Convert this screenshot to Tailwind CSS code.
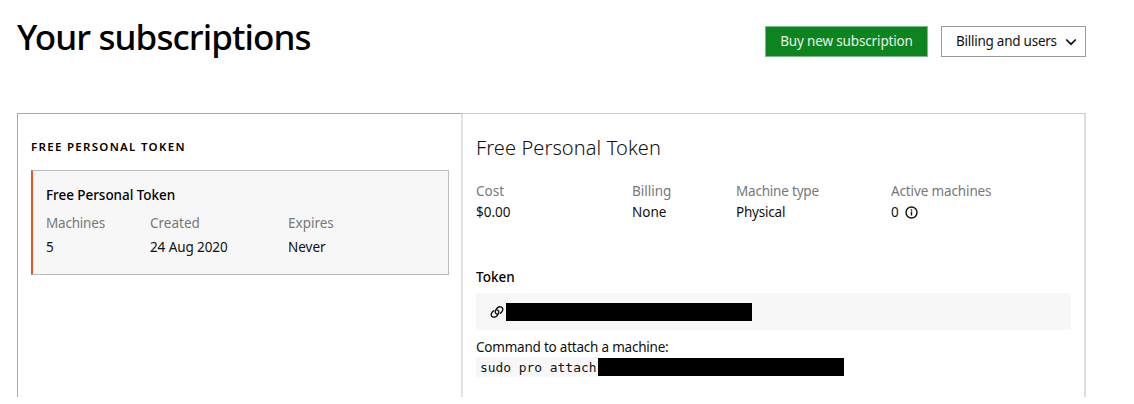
<!DOCTYPE html>
<html lang="en">
<head>
<meta charset="utf-8">
<title>Your subscriptions</title>
<script src="https://cdn.jsdelivr.net/npm/@tailwindcss/browser@4"></script>
</head>
<body class="h-[404px] overflow-hidden bg-white font-['Noto_Sans',sans-serif] text-[13.5px] leading-[21px] text-[#111]">
<div class="ml-[17px] w-[1069px]">
  <header class="flex h-[113px] justify-between">
    <h1 class="pt-[13px] text-[35px] leading-[48px] font-medium tracking-[-0.9px] text-black whitespace-nowrap">Your subscriptions</h1>
    <div class="flex gap-[13px] pt-[25px]">
      <button class="mt-px h-[31px] w-[163px] whitespace-nowrap border border-[#7dbb87] bg-[#0e8420] tracking-[-0.15px] text-[#e4f2e6]">Buy new subscription</button>
      <button class="mt-px flex h-[31px] w-[145px] items-center justify-between whitespace-nowrap border border-[#999] pr-[8px] pl-[14px] tracking-[-0.25px]">
        <span>Billing and users</span>
        <svg class="size-3" viewBox="0 0 12 12" fill="none" stroke="#111" stroke-width="1.7"><path d="M1.2 3.5 6 8.2 10.8 3.5"/></svg>
      </button>
    </div>
  </header>
  <main class="flex h-[284px]">
    <section class="w-[446px] border-t border-r-2 border-l border-t-[#aaa] border-r-[#e2e2e2] border-l-[#aaa] pt-[22px] pl-[13px]">
      <h2 class="text-[11.5px] leading-[21px] font-semibold tracking-[1.3px] whitespace-nowrap text-black">FREE PERSONAL TOKEN</h2>
      <div class="mt-[13px] h-[105px] w-[418px] border border-l-2 border-[#bbb] border-l-[#e95420] bg-[#f7f7f7] pt-[12px] pl-[13px]">
        <h3 class="leading-[24px] font-medium tracking-[-0.05px] text-black">Free Personal Token</h3>
        <div class="mt-[4px] grid grid-cols-[104px_138px_100px] leading-[24px]">
          <span class="tracking-[-0.2px] text-[#777]">Machines</span><span class="text-[#777]">Created</span><span class="text-[#777]">Expires</span>
          <span>5</span><span class="tracking-[-0.1px]">24 Aug 2020</span><span>Never</span>
        </div>
      </div>
    </section>
    <section class="w-[623px] border-t border-r-2 border-t-[#ccc] border-r-[#ddd] pt-[19px] pr-[13px] pl-[13px]">
      <h2 class="text-[20px] leading-[30px] font-light tracking-[0.1px]">Free Personal Token</h2>
      <div class="mt-[18px] grid grid-cols-[156px_104px_155px_150px]">
        <span class="text-[#777]">Cost</span><span class="text-[#777]">Billing</span><span class="tracking-[-0.2px] text-[#777]">Machine type</span><span class="tracking-[-0.13px] text-[#777]">Active machines</span>
        <span>$0.00</span><span>None</span><span class="tracking-[-0.2px]">Physical</span>
        <span class="flex items-center gap-[6px]">0
          <svg class="size-[13px]" viewBox="0 0 13 13" fill="none" stroke="#111" stroke-width="1.4"><circle cx="6.5" cy="6.5" r="5.5"/><path d="M6.5 5.6v4M6.5 3.2v1.5"/></svg>
        </span>
      </div>
      <h3 class="mt-[44px] font-medium text-black">Token</h3>
      <div class="mt-[5px] flex h-[37px] items-center bg-[#f7f7f7] pl-[14px]">
        <svg class="size-[14px]" viewBox="0 0 14 14" fill="none" stroke="#111" stroke-width="1.4" stroke-linecap="round"><path d="M7.4 9.1C5.4 8.8 4.7 6.9 5.7 5.2 7 2.7 9.4 1.2 11.4 2.1s1.7 3.3.2 5L10.5 8.2M6.6 4.9c2 .3 2.7 2.2 1.7 3.9-1.3 2.5-3.7 4-5.7 3.1s-1.7-3.3-.2-5L3.5 5.8"/></svg>
        <span class="ml-[2px] h-[18px] w-[246px] bg-black"></span>
      </div>
      <p class="mt-[7px] tracking-[-0.22px]">Command to attach a machine:</p>
      <div class="flex"><code class="-mt-px h-[20px] w-[122px] bg-[#f7f7f7] pl-[4px] font-['DejaVu_Sans_Mono',monospace] text-[12.9px] leading-[22px] whitespace-nowrap">sudo pro attach</code><span class="h-[18px] w-[246px] bg-black"></span></div>
    </section>
  </main>
</div>
</body>
</html>
